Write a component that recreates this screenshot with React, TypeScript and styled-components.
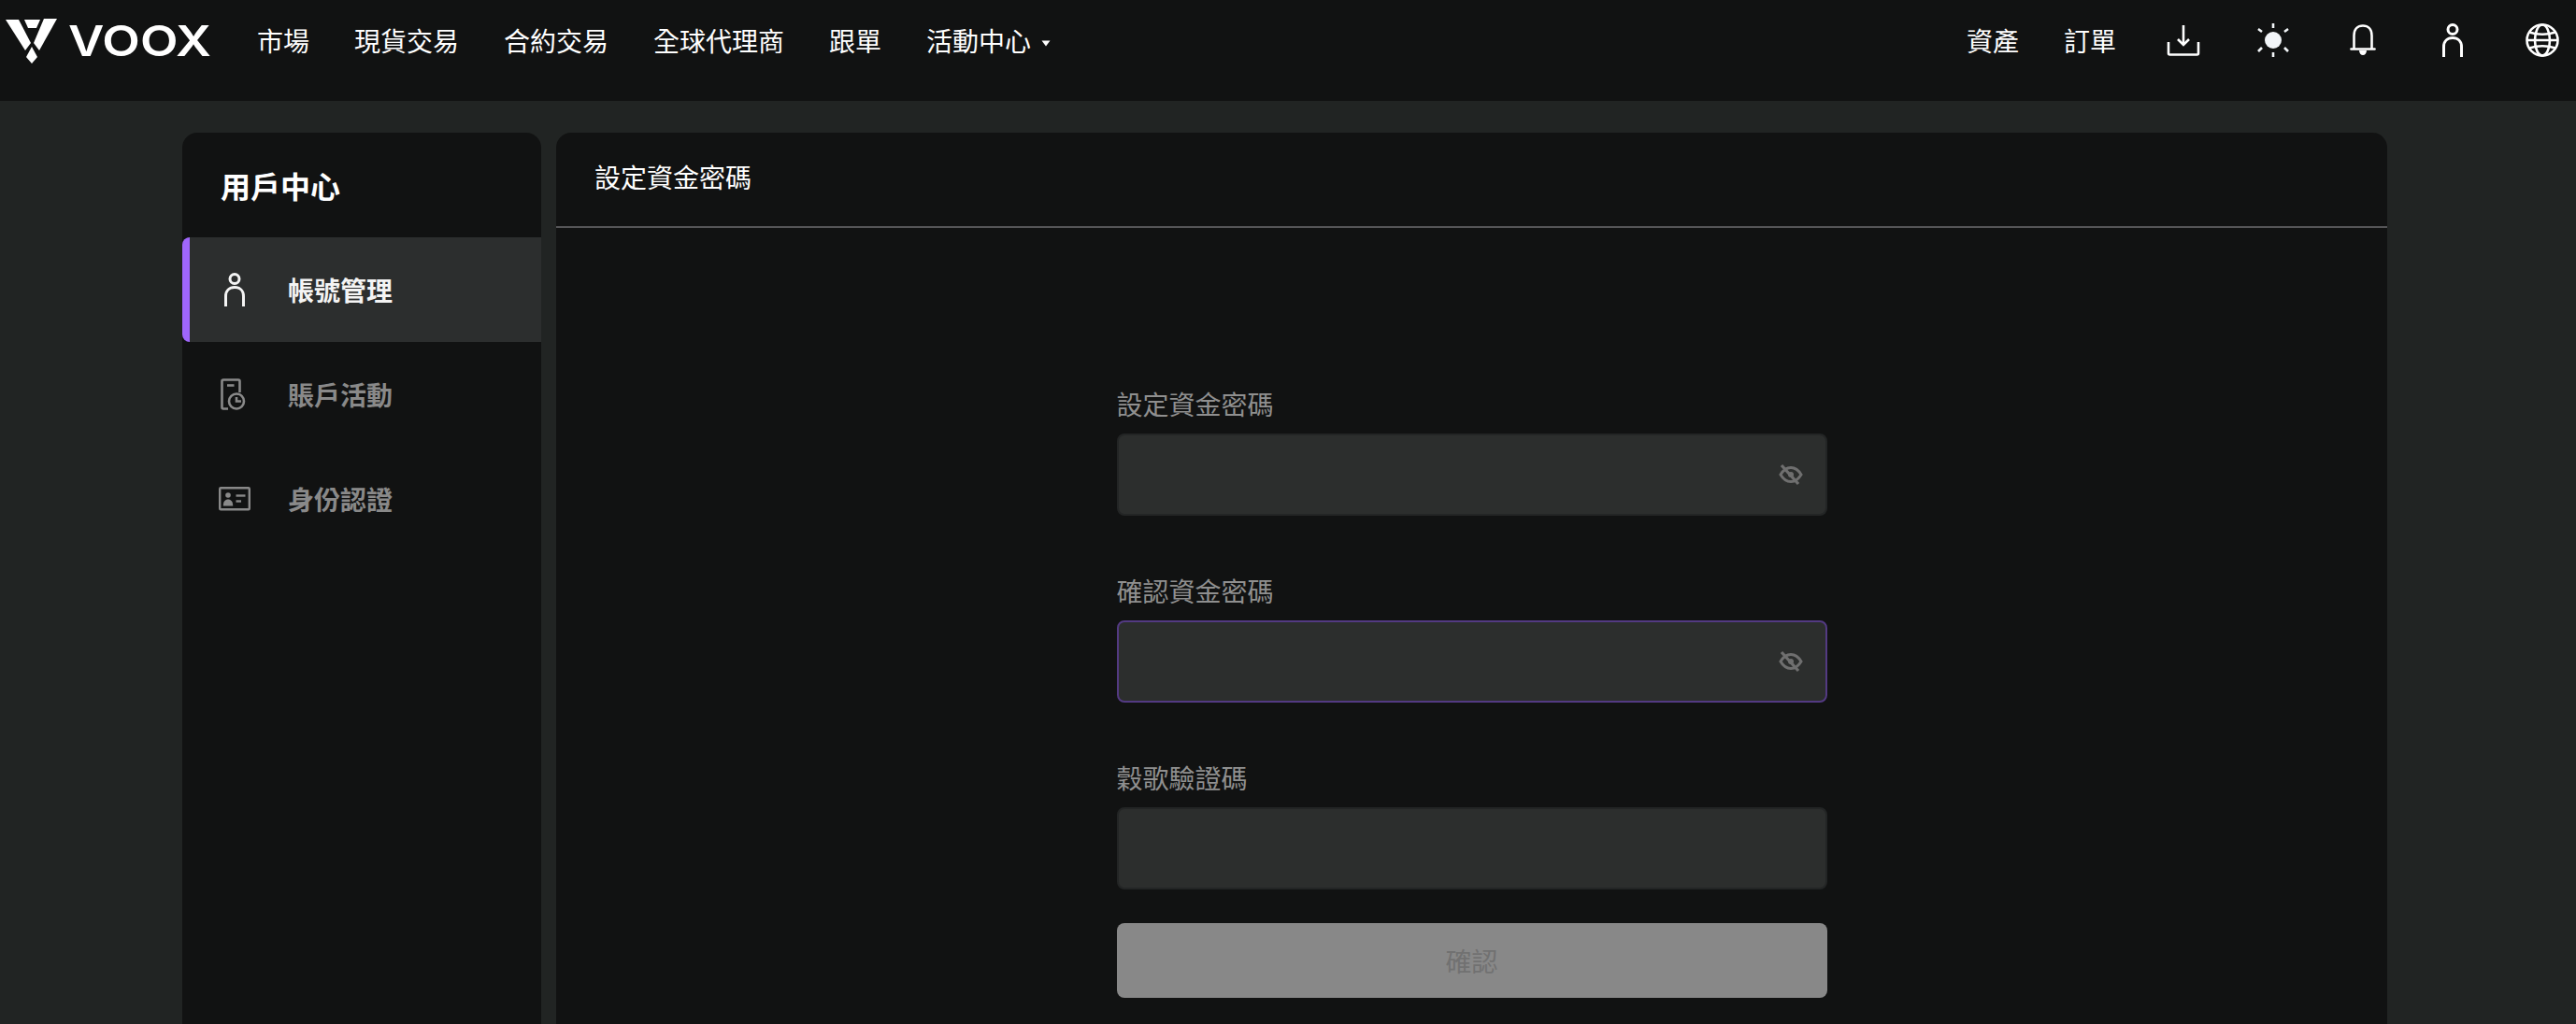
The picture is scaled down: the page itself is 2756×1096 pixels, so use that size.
import React from "react";
import styled, { createGlobalStyle } from "styled-components";

const Global = createGlobalStyle`
  html, body { margin: 0; padding: 0; height: 100%; overflow: hidden; background: #212423; }
  * { box-sizing: border-box; }
  body { font-family: "Noto Sans CJK TC", "Noto Sans", sans-serif; color: #fff; }
`;

const Page = styled.div`
  height: 1096px;
  display: flex;
  flex-direction: column;
  overflow: hidden;
`;

const Header = styled.header`
  flex: none;
  height: 108px;
  padding: 0 12px 22px 6px;
  background: #111212;
  display: flex;
  align-items: center;
`;

const LogoMark = styled.svg`
  flex: none;
  display: block;
  width: 220px;
  height: 48px;
  margin-top: 2px;
`;

const Nav = styled.nav`
  display: flex;
  align-items: center;
  gap: 48px;
  margin-left: 49px;
`;

const NavItem = styled.a`
  display: flex;
  align-items: center;
  font-size: 28px;
  line-height: 40px;
  color: #fff;
  white-space: nowrap;
`;

const Caret = styled.svg`
  display: block;
  width: 10px;
  height: 7px;
  margin: 6px 0 0 11px;
`;

const Actions = styled.div`
  margin-left: auto;
  display: flex;
  align-items: center;
  gap: 48px;
`;

const IconButton = styled.button`
  width: 48px;
  height: 48px;
  padding: 0;
  border: 0;
  background: none;
  color: #fff;
  display: flex;
  align-items: center;
  justify-content: center;
`;

const Body = styled.div`
  flex: 1;
  min-height: 0;
  padding: 34px 202px 0 195px;
  display: flex;
  gap: 16px;
  align-items: stretch;
`;

const Sidebar = styled.aside`
  flex: none;
  width: 384px;
  height: 1200px;
  background: #111212;
  border-radius: 16px;
`;

const SideTitle = styled.h2`
  margin: 0;
  height: 112px;
  padding: 0 0 0 41px;
  display: flex;
  align-items: center;
  font-size: 32px;
  line-height: 44px;
  font-weight: 700;
  color: #fff;
`;

const SideItem = styled.div<{ $active?: boolean }>`
  height: 112px;
  padding-left: 39px;
  display: flex;
  align-items: center;
  gap: 40px;
  border-radius: 8px 0 0 8px;
  font-size: 28px;
  font-weight: 700;
  color: ${(p) => (p.$active ? "#f4f4f4" : "#898989")};
  background: ${(p) =>
    p.$active
      ? "linear-gradient(to right, #9f66fb 8px, #2c2e2e 8px)"
      : "transparent"};
`;

const SideIconSlot = styled.span`
  flex: none;
  width: 34px;
  display: flex;
  justify-content: center;
  align-items: center;
`;

const Main = styled.main`
  flex: 1;
  min-width: 0;
  height: 1200px;
  background: #111212;
  border-radius: 16px;
`;

const MainHeader = styled.div`
  height: 102px;
  padding: 0 41px 6px;
  display: flex;
  align-items: center;
  border-bottom: 2px solid #555557;
  font-size: 28px;
  line-height: 40px;
  color: #fff;
`;

const Form = styled.form`
  width: 760px;
  margin: 0 auto;
  padding-top: 168px;
  display: flex;
  flex-direction: column;
`;

const Group = styled.div`
  margin-bottom: 60px;
  &:nth-of-type(3) { margin-bottom: 36px; }
`;

const Label = styled.label`
  display: block;
  font-size: 28px;
  line-height: 40px;
  margin-bottom: 12px;
  color: #8f8f8f;
`;

const FieldWrap = styled.div`
  position: relative;
`;

const Input = styled.input<{ $focused?: boolean }>`
  display: block;
  width: 100%;
  height: 88px;
  padding: 0 80px 0 24px;
  border-radius: 8px;
  border: 2px solid ${(p) => (p.$focused ? "#533a82" : "#232525")};
  background: #2c2e2d;
  color: #fff;
  font: inherit;
  outline: none;
`;

const EyeButton = styled.span`
  position: absolute;
  right: 26px;
  top: 32px;
  display: block;
  line-height: 0;
`;

const Submit = styled.button`
  display: block;
  width: 100%;
  height: 80px;
  border: 0;
  border-radius: 8px;
  background: #888888;
  color: #717171;
  font: inherit;
  font-size: 28px;
`;

const Logo = () => (
  <LogoMark viewBox="0 0 220 48" aria-label="VOOX">
    <g fill="#fff">
      <path d="M0 1 H14 L27 26 L21 34 Z" />
      <path d="M20 1 H37 L33 10 H24 Z" />
      <path d="M55 0 H41 L30 26 L36 34 Z" />
      <path d="M28 30 L34 41 L28 48 L22 41 Z" />
    </g>
    <text
      x="67"
      y="40"
      fill="#fff"
      fontFamily="Inter, sans-serif"
      fontWeight="600"
      fontSize="45"
      textLength="153"
      lengthAdjust="spacingAndGlyphs"
    >
      VOOX
    </text>
  </LogoMark>
);

const DownloadIcon = () => (
  <svg width="36" height="34" viewBox="0 0 36 34" fill="none" stroke="#fff" strokeWidth="2.6">
    <path d="M18 1 V21" />
    <path d="M12 16 L18 22 L24 16" />
    <path d="M2 19 V31 Q2 32.5 3.5 32.5 H32.5 Q34 32.5 34 31 V19" />
  </svg>
);

const SunIcon = () => (
  <svg width="36" height="38" viewBox="0 0 36 38" fill="#f2f5f8" stroke="none">
    <circle cx="18" cy="19" r="9" />
    <g stroke="#f2f5f8" strokeWidth="2.6" fill="none">
      <path d="M18 1 V6" />
      <path d="M18 32 V37" />
      <path d="M2 7 L6 10" />
      <path d="M34 7 L30 10" />
      <path d="M2 31 L6 27" />
      <path d="M34 31 L30 27" />
    </g>
  </svg>
);

const BellIcon = () => (
  <svg width="28" height="34" viewBox="0 0 28 34" fill="none" stroke="#fff" strokeWidth="2.6">
    <path d="M4.5 26 V12 C4.5 5 8.5 1.5 14 1.5 C19.5 1.5 23.5 5 23.5 12 V26" />
    <path d="M1.5 26.5 H26.5" strokeLinecap="round" />
    <path d="M10 28 H18 C18 31 16 33 14 33 C12 33 10 31 10 28 Z" fill="#fff" stroke="none" />
  </svg>
);

const UserIcon = ({ color = "#fff" }: { color?: string }) => (
  <svg width="22" height="36" viewBox="0 0 22 36" fill="none" stroke={color} strokeWidth="3">
    <circle cx="11" cy="6.5" r="5" />
    <path d="M1.5 36 V25 C1.5 19 5.5 15.5 11 15.5 C16.5 15.5 20.5 19 20.5 25 V36" />
  </svg>
);

const GlobeIcon = () => (
  <svg width="36" height="36" viewBox="0 0 36 36" fill="none" stroke="#fff" strokeWidth="2.6">
    <circle cx="18" cy="18" r="16.5" />
    <ellipse cx="18" cy="18" rx="8" ry="16.5" />
    <path d="M4 9.5 Q18 14 32 9.5" />
    <path d="M4 26.5 Q18 22 32 26.5" />
    <path d="M1.5 18 H34.5" />
  </svg>
);

const HistoryIcon = () => (
  <svg width="30" height="34" viewBox="0 0 30 34" fill="none" stroke="#898989" strokeWidth="2.6">
    <path d="M8 32.5 H3 Q1.5 32.5 1.5 31 V3 Q1.5 1.5 3 1.5 H19 Q20.5 1.5 20.5 3 V15" />
    <path d="M7 7.5 H14.5" />
    <circle cx="17" cy="24.5" r="8" />
    <path d="M17 20 V24.5 H22" />
  </svg>
);

const IdCardIcon = () => (
  <svg width="34" height="26" viewBox="0 0 34 26" fill="none" stroke="#898989" strokeWidth="2.4">
    <rect x="1.2" y="1.2" width="31.6" height="23" rx="1" />
    <circle cx="10" cy="9" r="2.8" fill="#898989" stroke="none" />
    <path d="M4.8 20.5 C4.8 15.5 7 13.5 10 13.5 C13 13.5 15.2 15.5 15.2 20.5 Z" fill="#898989" stroke="none" />
    <path d="M18.5 9.5 H28.5" />
    <path d="M18.5 15.5 H24" />
  </svg>
);

const EyeOffIcon = () => (
  <svg width="26" height="24" viewBox="0 0 26 24" fill="none" stroke="#6f6f6f">
    <path d="M2 12 C5.5 6 9 4.5 13 4.5 C17 4.5 20.5 6 24 12 C20.5 18 17 19.5 13 19.5 C9 19.5 5.5 18 2 12 Z" strokeWidth="3" />
    <circle cx="13" cy="12" r="3" fill="#6f6f6f" stroke="none" />
    <path d="M3 2 L21 22" strokeWidth="3.2" />
  </svg>
);

const NAV = ["市場", "現貨交易", "合約交易", "全球代理商", "跟單"];

export default function App() {
  return (
    <Page>
      <Global />
      <Header>
        <Logo />
        <Nav>
          {NAV.map((n) => (
            <NavItem key={n}>{n}</NavItem>
          ))}
          <NavItem>
            活動中心
            <Caret viewBox="0 0 10 7">
              <path d="M0.5 0.5 H9.5 L5 6.5 Z" fill="#fff" />
            </Caret>
          </NavItem>
        </Nav>
        <Actions>
          <NavItem>資產</NavItem>
          <NavItem>訂單</NavItem>
          <IconButton aria-label="download"><DownloadIcon /></IconButton>
          <IconButton aria-label="theme"><SunIcon /></IconButton>
          <IconButton aria-label="notifications"><BellIcon /></IconButton>
          <IconButton aria-label="account"><UserIcon /></IconButton>
          <IconButton aria-label="language"><GlobeIcon /></IconButton>
        </Actions>
      </Header>
      <Body>
        <Sidebar>
          <SideTitle>用戶中心</SideTitle>
          <SideItem $active>
            <SideIconSlot><UserIcon color="#f4f4f4" /></SideIconSlot>
            帳號管理
          </SideItem>
          <SideItem>
            <SideIconSlot><HistoryIcon /></SideIconSlot>
            賬戶活動
          </SideItem>
          <SideItem>
            <SideIconSlot><IdCardIcon /></SideIconSlot>
            身份認證
          </SideItem>
        </Sidebar>
        <Main>
          <MainHeader>設定資金密碼</MainHeader>
          <Form onSubmit={(e) => e.preventDefault()}>
            <Group>
              <Label>設定資金密碼</Label>
              <FieldWrap>
                <Input type="password" />
                <EyeButton><EyeOffIcon /></EyeButton>
              </FieldWrap>
            </Group>
            <Group>
              <Label>確認資金密碼</Label>
              <FieldWrap>
                <Input type="password" $focused />
                <EyeButton><EyeOffIcon /></EyeButton>
              </FieldWrap>
            </Group>
            <Group>
              <Label>穀歌驗證碼</Label>
              <FieldWrap>
                <Input type="text" />
              </FieldWrap>
            </Group>
            <Submit type="button" disabled>確認</Submit>
          </Form>
        </Main>
      </Body>
    </Page>
  );
}
